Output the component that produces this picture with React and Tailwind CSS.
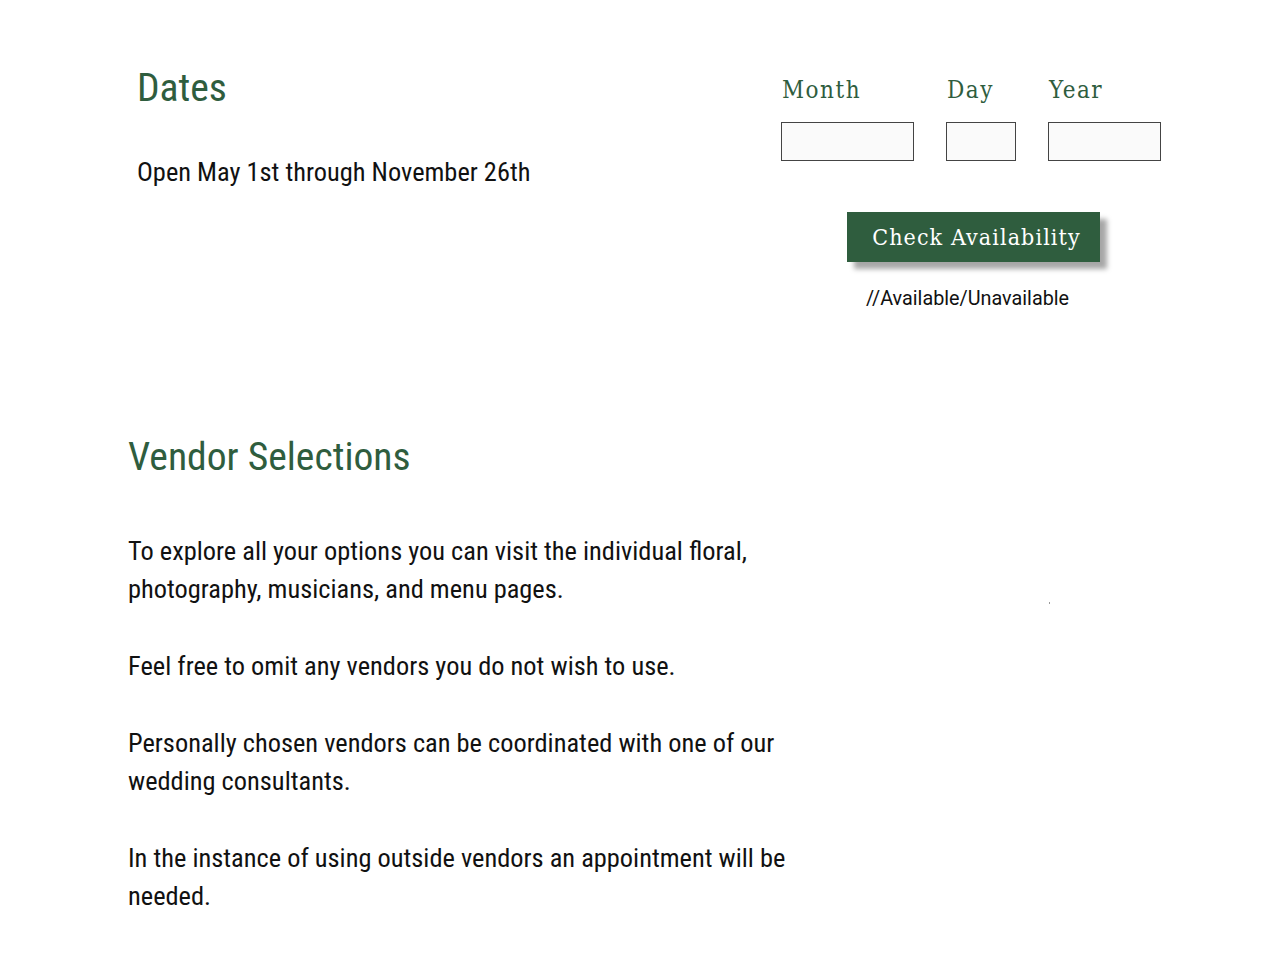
const sans = 'font-["Roboto_Condensed",Roboto,sans-serif]';
const slab = 'font-["DejaVu_Serif_Condensed","DejaVu_Serif",serif]';

function DateField({ label, width }) {
  return (
    <div className="flex flex-col">
      <label className={`${slab} text-[24px] leading-[28px] tracking-[1.5px] text-[#2f5d3e] pl-px`}>{label}</label>
      <input type="text" className={`${width} h-[39px] mt-[18px] bg-[#fafafa] border border-[#444] outline-none`} />
    </div>
  );
}

export default function App() {
  return (
    <div className="relative min-h-screen bg-white text-[#111]">
      {/* Dates */}
      <section className="flex items-start pt-[66px]">
        <div className="w-[644px] ml-[137px]">
          <h2 className={`${sans} text-[39.6px] leading-[43px] text-[#2f5d3e]`}>Dates</h2>
          <p className={`${sans} text-[26.4px] leading-[38px] mt-[44px]`}>Open May 1st through November 26th</p>
        </div>
        <div className="mt-[10px]">
          <div className="flex gap-[32px]">
            <DateField label="Month" width="w-[133px]" />
            <DateField label="Day" width="w-[70px]" />
            <DateField label="Year" width="w-[113px]" />
          </div>
          <button className={`${slab} block ml-[66px] mt-[51px] w-[253px] h-[50px] pl-[6px] bg-[#2f5d3e] text-white text-[23px] tracking-[1.1px] shadow-[7px_7px_5px_rgba(0,0,0,0.35)]`}>
            Check Availability
          </button>
          <p className="font-[Roboto,sans-serif] text-[19.8px] leading-[24px] mt-[25px] ml-[85px]">//Available/Unavailable</p>
        </div>
      </section>

      {/* Vendor Selections */}
      <section className={`${sans} ml-[128px] mt-[124px] pb-[40px]`}>
        <h2 className="text-[39.6px] leading-[43px] text-[#2f5d3e]">Vendor Selections</h2>
        <div className="w-[680px] mt-[54px] space-y-[39px] text-[26.4px] leading-[38px]">
          <p>To explore all your options you can visit the individual floral, photography, musicians, and menu pages.</p>
          <p>Feel free to omit any vendors you do not wish to use.</p>
          <p>Personally chosen vendors can be coordinated with one of our wedding consultants.</p>
          <p>In the instance of using outside vendors an appointment will be needed.</p>
        </div>
      </section>

      <span className="absolute left-[1049px] top-[602px] w-px h-[2px] bg-[#999]" />
    </div>
  );
}
